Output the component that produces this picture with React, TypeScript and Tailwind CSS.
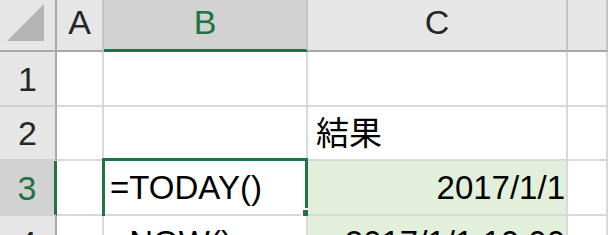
const font = "font-['Liberation_Sans','Noto_Sans_CJK_JP',sans-serif]";

function ColHead({ label, active }: { label?: string; active?: boolean }) {
  return (
    <div
      className={`flex items-center justify-center border-r-2 border-r-[#c4c4c4] pb-[6px] text-[34px] leading-none ${
        active
          ? "border-b-[3px] border-b-[#217346] bg-[#d2d2d2] text-[#217346]"
          : "border-b-2 border-b-[#a8a8a8] bg-[#e6e6e6] text-[#262626]"
      }`}
    >
      {label}
    </div>
  );
}

function RowHead({ n, active }: { n: number; active?: boolean }) {
  return (
    <div
      className={`flex items-center justify-center border-b-2 border-b-[#cfcfcf] text-[34px] leading-none ${
        active
          ? "border-r-[3px] border-r-[#217346] bg-[#d2d2d2] text-[#217346]"
          : "border-r-2 border-r-[#a8a8a8] bg-[#e6e6e6] text-[#262626]"
      }`}
    >
      {n}
    </div>
  );
}

function Cell({
  children,
  right,
  fill,
  className = "",
}: {
  children?: React.ReactNode;
  right?: boolean;
  fill?: boolean;
  className?: string;
}) {
  return (
    <div
      className={`relative flex items-center border-b-2 border-r-2 border-[#d9d9d9] text-[33px] leading-none text-black ${
        right ? "justify-end pr-[1px]" : "pl-[6px]"
      } ${fill ? "bg-[#e2efda]" : "bg-white"} ${className}`}
    >
      {children}
    </div>
  );
}

export default function App() {
  return (
    <div className={`h-[235px] w-[608px] overflow-hidden bg-white ${font}`}>
      <div className="grid grid-cols-[57px_47px_204px_260px_1fr] grid-rows-[52px_55px_54px_55px_55px]">
        {/* header row */}
        <div className="flex items-center justify-center border-b-2 border-r-2 border-b-[#a8a8a8] border-r-[#a8a8a8] bg-[#e6e6e6]">
          <svg width="38" height="37" viewBox="0 0 38 37" className="ml-[-4px] mt-[-6px]">
            <polygon points="37,0 37,37 0,37" fill="#b4b4b4" />
          </svg>
        </div>
        <ColHead label="A" />
        <ColHead label="B" active />
        <ColHead label="C" />
        <ColHead />

        {/* row 1 */}
        <RowHead n={1} />
        <Cell />
        <Cell />
        <Cell />
        <Cell />

        {/* row 2 */}
        <RowHead n={2} />
        <Cell />
        <Cell />
        <Cell className="pl-[8px]">結果</Cell>
        <Cell />

        {/* row 3 */}
        <RowHead n={3} active />
        <Cell />
        <Cell>
          =TODAY()
          <div className="absolute left-[-2px] top-[-3px] h-[62px] w-[206px] border-[3px] border-[#217346]" />
          <div className="absolute left-[197px] top-[47px] h-[13px] w-[13px] border-2 border-white bg-[#217346]" />
        </Cell>
        <Cell right fill>
          2017/1/1
        </Cell>
        <Cell />

        {/* row 4 */}
        <RowHead n={4} />
        <Cell />
        <Cell>=NOW()</Cell>
        <Cell right fill>
          2017/1/1 10:00
        </Cell>
        <Cell />
      </div>
    </div>
  );
}
